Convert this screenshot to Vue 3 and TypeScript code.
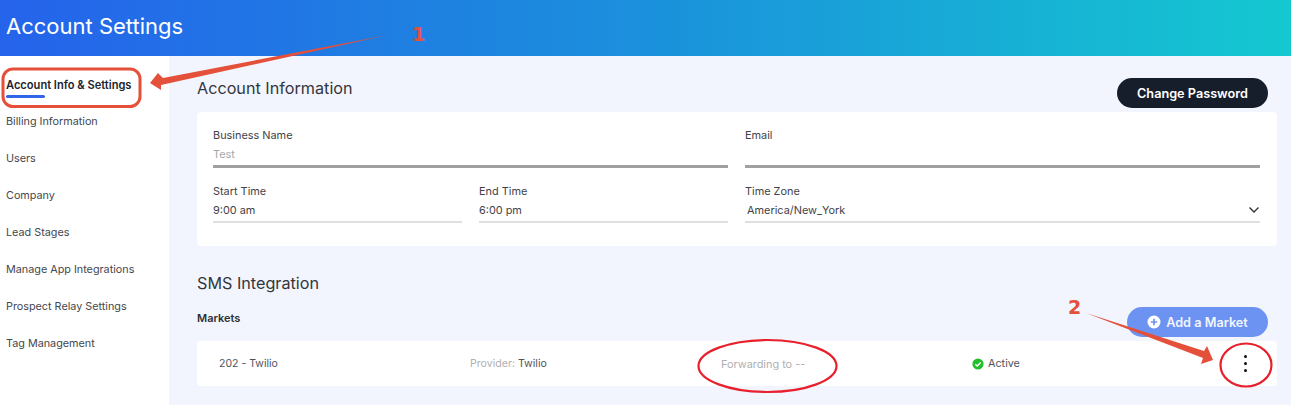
<script setup lang="ts">
const navItems: string[] = [
  'Account Info & Settings',
  'Billing Information',
  'Users',
  'Company',
  'Lead Stages',
  'Manage App Integrations',
  'Prospect Relay Settings',
  'Tag Management',
]
</script>

<template>
  <div class="page">
    <header class="topbar">Account Settings</header>
    <div class="body">
      <nav class="side">
        <a v-for="(item, i) in navItems" :key="item" class="nav" :class="{ on: i === 0 }">{{ item }}</a>
      </nav>
      <main class="main">
        <div class="head">
          <h2>Account Information</h2>
          <button class="btn dark">Change Password</button>
        </div>
        <section class="card">
          <div class="grid">
            <div class="field wide thick">
              <label>Business Name</label>
              <div class="val muted">Test</div>
            </div>
            <div class="field wide thick">
              <label>Email</label>
              <div class="val"></div>
            </div>
            <div class="field">
              <label>Start Time</label>
              <div class="val">9:00 am</div>
            </div>
            <div class="field">
              <label>End Time</label>
              <div class="val">6:00 pm</div>
            </div>
            <div class="field wide">
              <label>Time Zone</label>
              <div class="val select">
                <span>America/New_York</span>
                <svg width="12" height="8" viewBox="0 0 12 8"><path d="M1.5 1.5 6 6l4.5-4.5" fill="none" stroke="#333" stroke-width="1.4" /></svg>
              </div>
            </div>
          </div>
        </section>
        <h2 class="sms">SMS Integration</h2>
        <div class="markets">
          <strong>Markets</strong>
          <button class="btn blue">
            <svg width="14" height="14" viewBox="0 0 14 14"><circle cx="7" cy="7" r="6.5" fill="#fff" /><path d="M7 3.8v6.4M3.8 7h6.4" stroke="#6c93f2" stroke-width="1.7" /></svg>
            Add a Market
          </button>
        </div>
        <div class="row">
          <span class="c1">202 - Twilio</span>
          <span class="c2"><i>Provider:</i> Twilio</span>
          <span class="c3"><i>Forwarding to --</i></span>
          <span class="c4">
            <svg width="12" height="12" viewBox="0 0 12 12"><circle cx="6" cy="6" r="5.6" fill="#22c02d" /><path d="M3.3 6.2 5.2 8l3.5-3.6" fill="none" stroke="#fff" stroke-width="1.4" /></svg>
            Active
          </span>
          <span class="dots"><b></b><b></b><b></b></span>
        </div>
      </main>
    </div>

    <svg class="marks" width="1291" height="405" viewBox="0 0 1291 405">
      <rect x="3" y="69" width="137" height="37.500" rx="10" fill="none" stroke="#e4503a" stroke-width="3" />
      <path d="M388 35 163 78l-5-5-8 10 11 7 0-5z" fill="#e4503a" />
      <path d="M1086 313 1204 351l3-5 6 14-12 4 2-6z" fill="#e4503a" />
      <ellipse cx="767.500" cy="366" rx="69" ry="26" fill="none" stroke="#e8202c" stroke-width="2.200" />
      <ellipse cx="1246" cy="365" rx="25.500" ry="21.500" fill="none" stroke="#e8202c" stroke-width="2.200" />
      <text x="412" y="41" class="num">1</text>
      <text x="1068" y="314" class="num">2</text>
    </svg>
  </div>
</template>

<style>
html, body { margin: 0; background: #fff; }
</style>

<style scoped>
.page {
  position: relative;
  width: 1291px;
  height: 405px;
  overflow: hidden;
  font-family: Inter, "Liberation Sans", sans-serif;
  color: #3a3d44;
}
.topbar {
  height: 56px;
  box-sizing: border-box;
  padding: 12px 0 0 6px;
  font-size: 22px;
  line-height: 28px;
  color: #fff;
  background: linear-gradient(90deg, #2563eb 0%, #1b90dc 50%, #14c8d0 100%);
}
.body { display: flex; height: 349px; }
.side {
  width: 169px;
  flex: none;
  padding-top: 11px;
  box-sizing: border-box;
  display: flex;
  flex-direction: column;
}
.nav {
  height: 37px;
  padding-left: 6px;
  font-size: 10.800px;
  line-height: 35px;
  color: #44474e;
  white-space: nowrap;
  position: relative;
}
.nav.on { font-weight: 600; font-size: 11.100px; line-height: 37px; color: #20242c; }
.nav.on::after {
  content: "";
  position: absolute;
  left: 6px;
  top: 28px;
  width: 39px;
  height: 3px;
  background: #2f66e8;
  border-radius: 2px;
}
.main {
  flex: 1;
  background: #f2f5fe;
  padding: 22px 14px 0 28px;
  box-sizing: border-box;
  min-width: 0;
}
.head {
  display: flex;
  justify-content: space-between;
  align-items: flex-start;
  height: 30px;
  padding-right: 9px;
  margin-bottom: 4px;
}
h2 {
  margin: 0;
  font-size: 16.200px;
  font-weight: 400;
  color: #33363c;
  line-height: 22px;
}
.head h2 { margin-top: -1px; }
.btn {
  height: 30px;
  border: none;
  border-radius: 15px;
  font: 600 12.700px Inter, "Liberation Sans", sans-serif;
  color: #fff;
  display: inline-flex;
  align-items: center;
  justify-content: center;
  gap: 5px;
  padding: 0;
}
.dark { width: 151px; background: #171e2b; }
.blue { width: 141px; background: #6c93f2; color: #f2f5fe; }
.card {
  background: #fff;
  border-radius: 4px;
  height: 134px;
  box-sizing: border-box;
  padding: 16px 17px 0 16px;
}
.grid {
  display: grid;
  grid-template-columns: repeat(4, 1fr);
  column-gap: 17px;
  row-gap: 16px;
}
.wide { grid-column: span 2; }
.field label {
  display: block;
  font-size: 10.900px;
  line-height: 14px;
  color: #3f4248;
}
.val {
  height: 23px;
  margin-top: 2px;
  box-sizing: border-box;
  padding-top: 2px;
  font-size: 10.900px;
  line-height: 16px;
  color: #3f4248;
  border-bottom: 2px solid #e0e0e0;
}
.thick .val { border-bottom: 3px solid #a0a0a0; height: 24px; padding-top: 2px; }
.muted { color: #a8a8a8; }
.select {
  display: flex;
  justify-content: space-between;
  align-items: center;
  padding: 0 0 1px 2px;
}
.sms { margin-top: 26px; }
.markets {
  display: flex;
  justify-content: space-between;
  align-items: center;
  height: 30px;
  margin-top: 13px;
  padding-right: 9px;
  font-size: 11px;
}
.markets strong { font-weight: 600; color: #2b2e35; margin-top: -8px; }
.row {
  position: relative;
  display: flex;
  align-items: center;
  height: 45px;
  margin-top: 4px;
  background: #fff;
  border-radius: 4px;
  font-size: 10.800px;
  color: #50535a;
}
.row > span { display: block; flex: none; }
.c1 { width: 251px; padding-left: 22px; box-sizing: border-box; font-size: 10.500px; }
.c2 { width: 273px; padding-left: 22px; box-sizing: border-box; font-size: 10.600px; }
.c3 { width: 251px; font-size: 10.900px; }
.row i { font-style: normal; color: #b0b0b0; }
.row .c4 { display: flex; align-items: center; gap: 4px; }
.row .dots {
  position: absolute;
  left: 1047px;
  top: 14px;
  display: flex;
  flex-direction: column;
  gap: 4px;
}
.dots b { display: block; width: 3px; height: 3px; border-radius: 50%; background: #111; }
.marks { position: absolute; left: 0; top: 0; pointer-events: none; }
.num {
  font: 700 19px "DejaVu Sans", sans-serif;
  fill: #e4503a;
}
</style>
